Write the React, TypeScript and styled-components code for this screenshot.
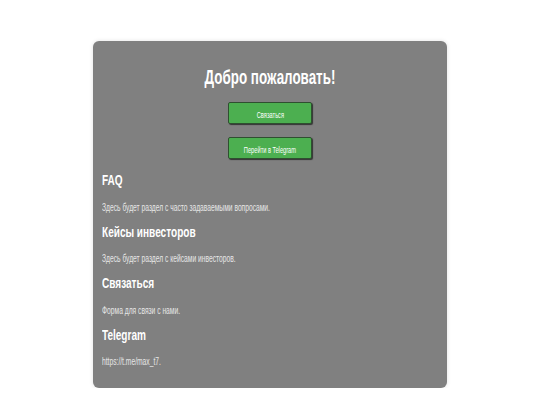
import styled, { createGlobalStyle } from 'styled-components';

const GlobalStyle = createGlobalStyle`
  html, body {
    margin: 0;
    padding: 0;
    background: #ffffff;
    font-family: "Liberation Sans", Arial, sans-serif;
  }
`;

const Card = styled.div`
  box-sizing: border-box;
  width: 354px;
  height: 347px;
  margin: 41px auto 0;
  padding: 24px 9px 0;
  background-color: #808080;
  border-radius: 6px;
  box-shadow: 0 0 4px rgba(0, 0, 0, 0.12);
`;

const Title = styled.h1`
  margin: 0;
  font-size: 20px;
  line-height: 24px;
  font-weight: bold;
  color: #ffffff;
  text-align: center;
  transform: scaleX(0.67);
`;

const Buttons = styled.div`
  display: flex;
  flex-direction: column;
  align-items: center;
  gap: 13px;
  margin: 13px 0 3px;
`;

const Button = styled.button`
  box-sizing: border-box;
  width: 84px;
  height: 22px;
  padding: 0;
  background-color: #4caf50;
  border: 1px solid #2f4f30;
  border-radius: 2px;
  box-shadow: 1px 1px 1px rgba(0, 0, 0, 0.6);
  cursor: pointer;
`;

const ButtonLabel = styled.span`
  display: inline-block;
  font-family: "Liberation Sans", Arial, sans-serif;
  font-size: 8.5px;
  color: #ffffff;
  white-space: nowrap;
  transform: scaleX(0.67);
`;

const Section = styled.section`
  display: flex;
  flex-direction: column;
`;

const Heading = styled.h2`
  margin: 9px 0 0;
  font-size: 15px;
  line-height: 18px;
  font-weight: bold;
  color: #ffffff;
  white-space: nowrap;
  transform: scaleX(0.67);
  transform-origin: left center;
`;

const Text = styled.p`
  margin: 12.5px 0 0;
  font-size: 10px;
  line-height: 12px;
  color: #e6e6e6;
  white-space: nowrap;
  transform: scaleX(0.67);
  transform-origin: left center;
`;

const sections = [
  { title: 'FAQ', text: 'Здесь будет раздел с часто задаваемыми вопросами.' },
  { title: 'Кейсы инвесторов', text: 'Здесь будет раздел с кейсами инвесторов.' },
  { title: 'Связаться', text: 'Форма для связи с нами.' },
  { title: 'Telegram', text: 'https://t.me/max_t7.' },
];

const App = () => {
  return (
    <>
      <GlobalStyle />
      <Card>
        <Title>Добро пожаловать!</Title>
        <Buttons>
          <Button>
            <ButtonLabel>Связаться</ButtonLabel>
          </Button>
          <Button>
            <ButtonLabel>Перейти в Telegram</ButtonLabel>
          </Button>
        </Buttons>
        {sections.map((s) => (
          <Section key={s.title}>
            <Heading>{s.title}</Heading>
            <Text>{s.text}</Text>
          </Section>
        ))}
      </Card>
    </>
  );
};

export default App;
